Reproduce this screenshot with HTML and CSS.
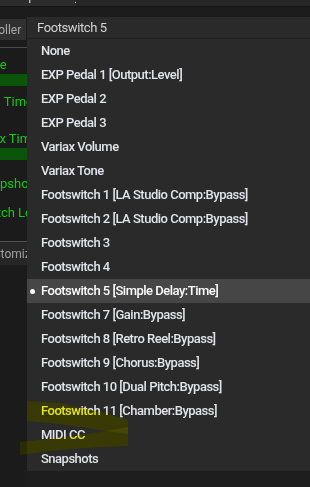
FILE: index.html
```html
<!DOCTYPE html>
<html>
<head>
<meta charset="utf-8">
<link rel="stylesheet" href="styles.css">
</head>
<body>
<div class="app">
  <div class="topbar">
    <div class="tab"><span>Simple Delay</span></div>
  </div>
  <div class="subbar"></div>
  <div class="main">
    <aside class="side">
      <div class="btn"><span class="btn-text">Controller</span></div>
      <div class="sep sep-top"></div>
      <div class="g g1">Type</div>
      <div class="gbar gbar1"></div>
      <div class="g g2">Scan Time</div>
      <div class="g g3">Max Time</div>
      <div class="gbar gbar2"></div>
      <div class="g g4">Snapshot</div>
      <div class="g g5">Switch Lock</div>
      <div class="sep sep-bot"></div>
      <div class="btn2"><span class="btn2-text">Customize</span></div>
    </aside>
    <div class="dropdown">
      <div class="dd-head">Footswitch 5</div>
      <ul class="dd-list">
        <li>None</li>
        <li>EXP Pedal 1 [Output:Level]</li>
        <li>EXP Pedal 2</li>
        <li>EXP Pedal 3</li>
        <li>Variax Volume</li>
        <li>Variax Tone</li>
        <li>Footswitch 1 [LA Studio Comp:Bypass]</li>
        <li>Footswitch 2 [LA Studio Comp:Bypass]</li>
        <li>Footswitch 3</li>
        <li>Footswitch 4</li>
        <li class="selected">Footswitch 5 [Simple Delay:Time]</li>
        <li>Footswitch 7 [Gain:Bypass]</li>
        <li>Footswitch 8 [Retro Reel:Bypass]</li>
        <li>Footswitch 9 [Chorus:Bypass]</li>
        <li>Footswitch 10 [Dual Pitch:Bypass]</li>
        <li>Footswitch 11 [Chamber:Bypass]</li>
        <li>MIDI CC</li>
        <li>Snapshots</li>
      </ul>
    </div>
  </div>
  <svg class="marker marker-mul" width="310" height="487" viewBox="0 0 310 487">
    <path d="M27 401 L60 403 L100 412 L128 420 L128 434 L100 430 L60 424 L27 421 Z"/>
    <path d="M20 442 L60 438 L100 432 L128 427 L128 446 L100 447 L60 450 L20 455 Z"/>
  </svg>
  <svg class="marker marker-tint" width="310" height="487" viewBox="0 0 310 487">
    <path d="M27 401 L60 403 L100 412 L128 420 L128 434 L100 430 L60 424 L27 421 Z"/>
    <path d="M20 442 L60 438 L100 432 L128 427 L128 446 L100 447 L60 450 L20 455 Z"/>
  </svg>
</div>
</body>
</html>
```

FILE: styles.css
```css
html, body {
  margin: 0;
  padding: 0;
  background: #1e1e1e;
}
body {
  width: 310px;
  height: 487px;
  overflow: hidden;
  font-family: Roboto, "Noto Sans", sans-serif;
}
.app {
  position: relative;
  width: 310px;
  height: 487px;
  display: flex;
  flex-direction: column;
  background: #1e1e1e;
}
.topbar {
  height: 6px;
  background: #262626;
  border-bottom: 1px solid #151515;
  display: flex;
  overflow: hidden;
}
.tab {
  width: 76px;
  height: 6px;
  background: #2d2d2d;
  overflow: hidden;
}
.tab span {
  display: block;
  margin-top: -11px;
  margin-left: 6px;
  font-size: 13px;
  line-height: 13px;
  color: #cfcfcf;
  white-space: nowrap;
}
.subbar {
  height: 10px;
  background: #1c1c1c;
}
.main {
  display: flex;
  flex: 1;
  min-height: 0;
}
.side {
  width: 27px;
  flex: none;
  background: #1b1b1b;
  overflow: hidden;
  display: flex;
  flex-direction: column;
  align-self: stretch;
}
.btn {
  margin-top: 2px;
  height: 21px;
  width: 26px;
  background: #303030;
  overflow: hidden;
  display: flex;
  align-items: center;
}
.btn-text {
  margin-left: -31px;
  font-size: 12px;
  color: #a9a9a9;
  white-space: nowrap;
}
.sep {
  height: 1px;
  width: 27px;
  background: #4a4a4a;
  flex: none;
}
.sep-top { margin-top: 7px; }
.g {
  height: 16px;
  line-height: 16px;
  font-size: 13px;
  color: #12cc12;
  white-space: nowrap;
  flex: none;
}
.g1 { margin-top: 9px; margin-left: -21px; }
.g2 { margin-top: 8px; margin-left: -28px; }
.g3 { margin-top: 21px; margin-left: -19px; }
.g4 { margin-top: 16px; margin-left: -22px; }
.g5 { margin-top: 13px; margin-left: -24px; }
.gbar {
  background: #0b550b;
  width: 27px;
  flex: none;
}
.gbar1 { margin-top: 1px; height: 12px; }
.gbar2 { margin-top: 1px; height: 12px; }
.sep-bot { margin-top: 20px; background: #505050; }
.btn2 {
  height: 23px;
  background: #262626;
  display: flex;
  align-items: center;
  overflow: hidden;
  flex: none;
}
.btn2-text {
  margin-left: -20px;
  font-size: 12px;
  color: #a0a0a0;
  white-space: nowrap;
}
.dropdown {
  flex: 1;
  background: #2a2a2a;
  align-self: flex-start;
}
.dd-head {
  height: 21px;
  line-height: 21px;
  padding-left: 10px;
  font-size: 13px;
  letter-spacing: -0.4px;
  color: #d4d4d4;
  border-bottom: 1px solid #212121;
}
.dd-list {
  list-style: none;
  margin: 0;
  padding: 0;
}
.dd-list li {
  position: relative;
  height: 24px;
  line-height: 24px;
  padding-left: 14px;
  font-size: 13px;
  font-weight: 500;
  letter-spacing: -0.5px;
  color: #e1e4ea;
  white-space: nowrap;
}
.dd-list li.selected {
  background: #464646;
  color: #ffffff;
}
.dd-list li.selected::before {
  content: "";
  position: absolute;
  left: 3px;
  top: 10px;
  width: 5px;
  height: 5px;
  border-radius: 50%;
  background: #ffffff;
}
.marker {
  position: absolute;
  left: 0;
  top: 0;
  pointer-events: none;
}
.marker-mul {
  mix-blend-mode: multiply;
}
.marker-mul path {
  fill: #ffff28;
}
.marker-tint path {
  fill: #ffff00;
  opacity: 0.07;
}
```
